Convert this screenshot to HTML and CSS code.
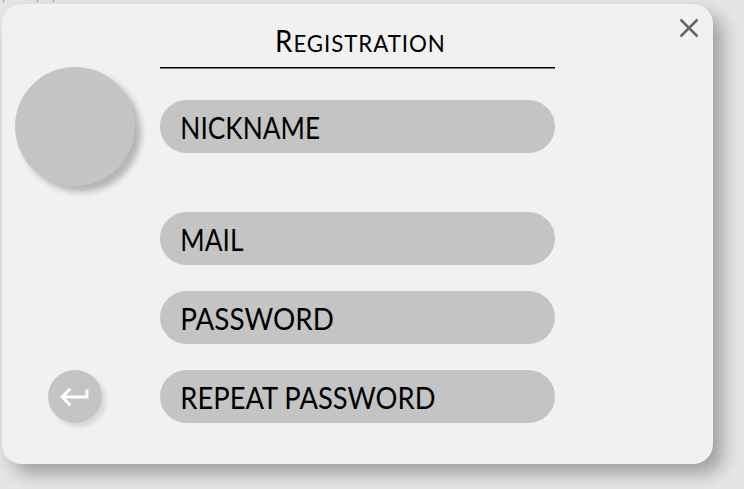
FILE: index.html
```
<!DOCTYPE html>
<html lang="en">
<head>
<meta charset="utf-8">
<title>Registration</title>
<link rel="stylesheet" href="styles.css">
</head>
<body>
<div class="ticks"><i></i><i></i><i></i></div>
<form class="card">
  <aside class="side">
    <div class="avatar"></div>
    <button class="back" type="button" aria-label="Back">
      <svg width="53" height="53" viewBox="0 0 53 53"><path d="M39 19.5V27H14.8M22.3 18.8L14.1 27L22.3 35.2" fill="none" stroke="#fff" stroke-width="2.8"/></svg>
    </button>
  </aside>
  <main class="main">
    <h1 class="title"><span class="text"><span class="cap">R</span>EGISTRATION</span></h1>
    <div class="field nickname"><span>NICKNAME</span></div>
    <div class="field mail"><span>MAIL</span></div>
    <div class="field password"><span>PASSWORD</span></div>
    <div class="field repeat"><span>REPEAT PASSWORD</span></div>
  </main>
  <button class="close" type="button" aria-label="Close">
    <svg width="20" height="20" viewBox="0 0 20 20"><path d="M1.5 1.5L18.5 18.5M18.5 1.5L1.5 18.5" stroke="#686868" stroke-width="2.6"/></svg>
  </button>
</form>
</body>
</html>
```
FILE: styles.css
```
* { box-sizing: border-box; }
body { margin: 0; height: 489px; overflow: hidden; background: #e5e5e5; font-family: Lato, "Open Sans", sans-serif; color: #000; }
.ticks { display: flex; height: 4px; padding-left: 3px; }
.ticks i { width: 1px; height: 2px; background: #999; }
.ticks i:nth-child(2) { margin-left: 33px; }
.ticks i:nth-child(3) { margin-left: 15px; }
.card { display: flex; width: 711px; height: 460px; margin: 0 0 0 2px; border-radius: 20px; background: #f1f1f1; box-shadow: 10px 10px 18px rgba(0,0,0,.3); }
.side { width: 158px; padding: 63px 0 0 13px; }
.avatar { width: 120px; height: 119px; border-radius: 50%; background: #c4c4c4; box-shadow: 6px 6px 6px rgba(0,0,0,.25); }
button { display: block; padding: 0; border: 0; background: none; }
.back { width: 54px; height: 53px; margin: 184px 0 0 33px; border-radius: 50%; background: #c4c4c4; box-shadow: 4px 4px 4px rgba(0,0,0,.1); }
svg { display: block; }
.main { width: 395px; }
.title { height: 65px; margin: 0; padding: 18px 0 0 115px; background: linear-gradient(#000 50%, #777 50%) bottom / 100% 2px no-repeat; font-size: 24px; line-height: 36px; font-weight: 400; letter-spacing: 1px; white-space: nowrap; }
.text { display: inline-block; transform: scaleX(.929); transform-origin: left center; }
.cap { font-size: 30px; line-height: 36px; }
.field { height: 53px; margin-top: 26px; padding-left: 20px; border-radius: 27px; background: #c4c4c4; font-size: 30px; line-height: 55px; white-space: nowrap; }
.field span { display: inline-block; transform-origin: 3px center; }
.nickname span { transform: scaleX(.876); }
.mail span { transform: scaleX(.876); }
.password span { transform: scaleX(.927); }
.repeat span { transform: scaleX(.912); }
.field.nickname { margin-top: 31px; }
.field.mail { margin-top: 59px; }
.close { margin: 14px 0 0 124px; align-self: flex-start; }
```
